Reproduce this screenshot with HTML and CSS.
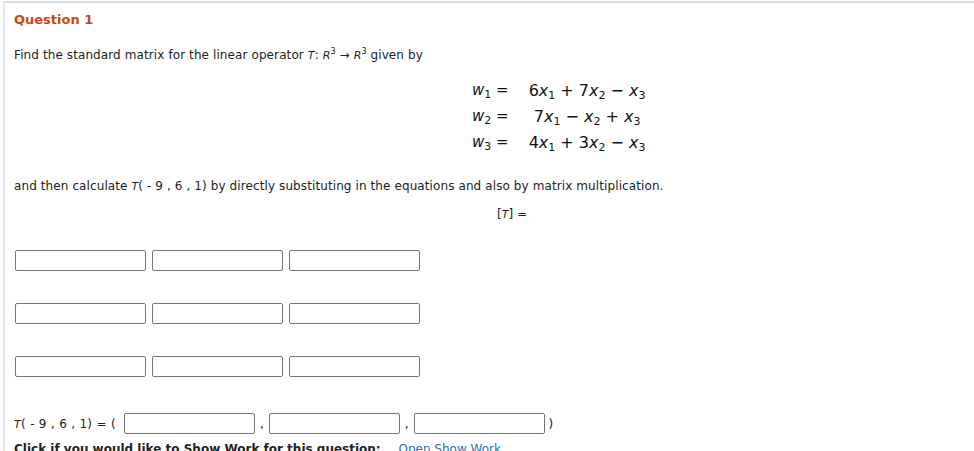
FILE: index.html
```html
<!DOCTYPE html>
<html lang="en">
<head>
  <meta charset="UTF-8">
  <meta name="viewport" content="width=device-width, initial-scale=1.0">
  <title>Question 1</title>
  <link rel="stylesheet" href="styles.css">
</head>
<body>
  <div class="question">
    <h2 class="q-title">Question 1</h2>
    <p class="prompt">Find the standard matrix for the linear operator <i>T</i>: <i>R</i><sup>3</sup> &rarr; <i>R</i><sup>3</sup> given by</p>

    <table class="eqs">
      <tr>
        <td class="lhs"><i>w</i><sub>1</sub> =</td>
        <td class="rhs">6<i>x</i><sub>1</sub> + 7<i>x</i><sub>2</sub> &minus; <i>x</i><sub>3</sub></td>
      </tr>
      <tr>
        <td class="lhs"><i>w</i><sub>2</sub> =</td>
        <td class="rhs">7<i>x</i><sub>1</sub> &minus; <i>x</i><sub>2</sub> + <i>x</i><sub>3</sub></td>
      </tr>
      <tr>
        <td class="lhs"><i>w</i><sub>3</sub> =</td>
        <td class="rhs">4<i>x</i><sub>1</sub> + 3<i>x</i><sub>2</sub> &minus; <i>x</i><sub>3</sub></td>
      </tr>
    </table>

    <p class="prompt then">and then calculate <i>T</i>( - 9 , 6 , 1) by directly substituting in the equations and also by matrix multiplication.</p>
    <p class="matrix-label">[<i>T</i>] =</p>

    <div class="matrix-grid">
      <input type="text"><input type="text"><input type="text">
      <input type="text"><input type="text"><input type="text">
      <input type="text"><input type="text"><input type="text">
    </div>

    <div class="answer-row">
      <span class="lead"><i>T</i>( - 9 , 6 , 1) = (</span>
      <input type="text">
      <span class="sep">,</span>
      <input type="text">
      <span class="sep">,</span>
      <input type="text">
      <span class="close">)</span>
    </div>

    <p class="show-work"><b>Click if you would like to Show Work for this question:</b> <a href="#">Open Show Work</a></p>
  </div>
</body>
</html>
```

FILE: styles.css
```css
* {
  box-sizing: border-box;
}

body {
  margin: 1px 0 0 3px;
  font-family: 'DejaVu Sans', sans-serif;
  font-size: 12px;
  color: #222;
  background: #fff;
}

.question {
  border-top: 2px solid #d6dbe3;
  border-left: 2px solid #e1e6ed;
  padding: 9px 0 0 9px;
  height: 460px;
}

.q-title {
  margin: 0;
  font-size: 13px;
  font-weight: bold;
  color: #c84810;
}

.prompt {
  margin: 21px 0 0;
  line-height: 15px;
  letter-spacing: 0.1px;
}

.prompt.then {
  margin-top: 24px;
}

.prompt i,
.matrix-label i,
.answer-row i {
  font-size: 11px;
}

.prompt sup {
  font-size: 8px;
  vertical-align: 5px;
  line-height: 0;
}

/* equations */
.eqs {
  margin: 14px 0 0 458px;
  border-collapse: collapse;
  font-size: 15px;
  color: #111;
}

.eqs td {
  padding: 0;
  height: 26px;
}

.eqs .lhs {
  text-align: right;
  padding-right: 20px;
}

.eqs .rhs {
  text-align: center;
  font-size: 16px;
}

.eqs sub {
  font-size: 11px;
  vertical-align: -3px;
  line-height: 0;
}

.matrix-label {
  margin: 13px 0 0 483px;
}

/* answer boxes */
input {
  width: 131px;
  height: 21px;
  margin: 0;
  padding: 2px 4px;
  border: 1px solid #767676;
  border-radius: 2px;
  background: #fff;
}

.matrix-grid {
  display: grid;
  grid-template-columns: repeat(3, 131px);
  column-gap: 6px;
  row-gap: 32px;
  margin: 29px 0 0 1px;
}

.answer-row {
  display: flex;
  align-items: center;
  margin-top: 36px;
}

.answer-row .lead {
  padding-right: 8px;
  letter-spacing: 0.3px;
}

.answer-row .sep {
  padding: 0 5px;
}

.answer-row .close {
  padding: 0 0 0 4px;
}

.show-work {
  margin: 8px 0 0;
}

.show-work b {
  font-size: 12px;
}

.show-work a {
  margin-left: 14px;
  color: #2a6fb3;
  text-decoration: none;
}
```
